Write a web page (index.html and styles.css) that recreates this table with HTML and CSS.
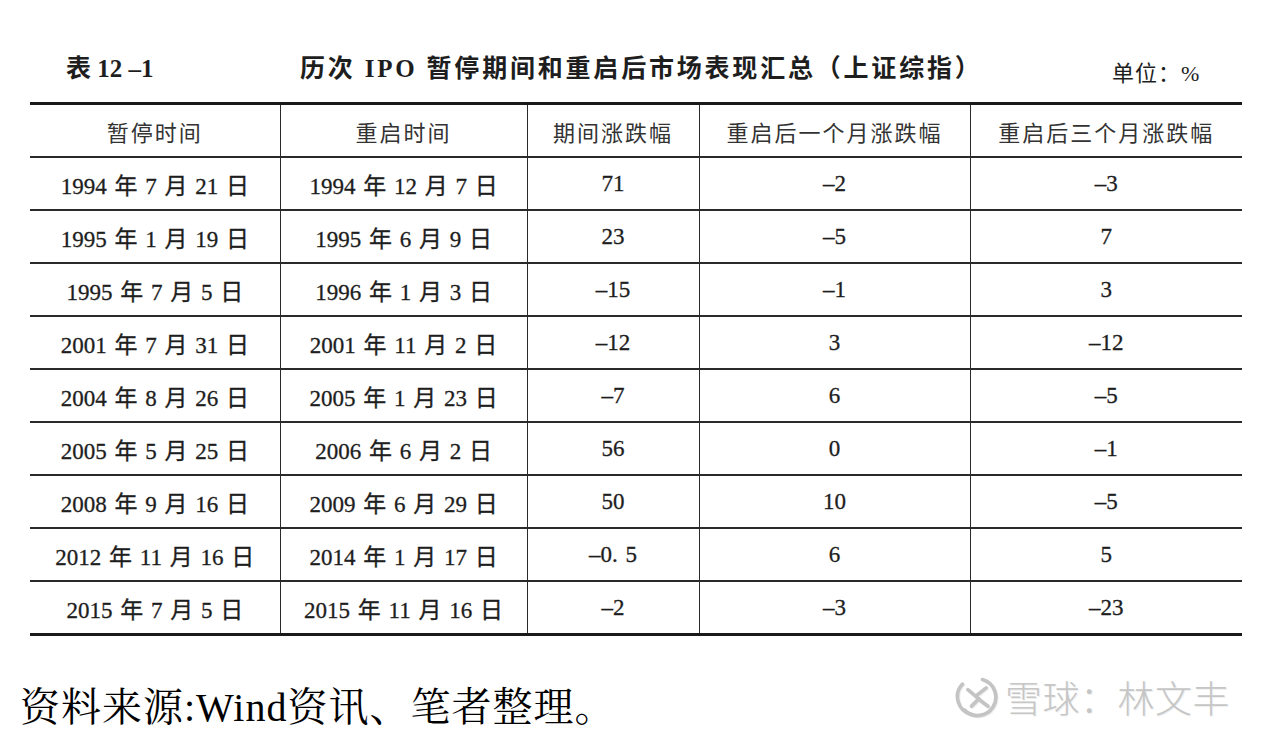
FILE: index.html
```html
<!DOCTYPE html>
<html lang="zh-CN">
<head>
<meta charset="utf-8">
<title>历次IPO暂停期间和重启后市场表现汇总</title>
<link rel="stylesheet" href="styles.css">
</head>
<body>
<div class="page">
  <div class="caption">
    <span class="cap-no">表 12 –1</span>
    <span class="cap-title">历次 IPO 暂停期间和重启后市场表现汇总（上证综指）</span>
    <span class="cap-unit">单位：%</span>
  </div>
  <table class="data">
    <colgroup>
      <col class="c1"><col class="c2"><col class="c3"><col class="c4"><col class="c5">
    </colgroup>
    <thead>
      <tr><th>暂停时间</th><th>重启时间</th><th>期间涨跌幅</th><th>重启后一个月涨跌幅</th><th>重启后三个月涨跌幅</th></tr>
    </thead>
    <tbody>
      <tr><td>1994 年 7 月 21 日</td><td>1994 年 12 月 7 日</td><td>71</td><td>–2</td><td>–3</td></tr>
      <tr><td>1995 年 1 月 19 日</td><td>1995 年 6 月 9 日</td><td>23</td><td>–5</td><td>7</td></tr>
      <tr><td>1995 年 7 月 5 日</td><td>1996 年 1 月 3 日</td><td>–15</td><td>–1</td><td>3</td></tr>
      <tr><td>2001 年 7 月 31 日</td><td>2001 年 11 月 2 日</td><td>–12</td><td>3</td><td>–12</td></tr>
      <tr><td>2004 年 8 月 26 日</td><td>2005 年 1 月 23 日</td><td>–7</td><td>6</td><td>–5</td></tr>
      <tr><td>2005 年 5 月 25 日</td><td>2006 年 6 月 2 日</td><td>56</td><td>0</td><td>–1</td></tr>
      <tr><td>2008 年 9 月 16 日</td><td>2009 年 6 月 29 日</td><td>50</td><td>10</td><td>–5</td></tr>
      <tr><td>2012 年 11 月 16 日</td><td>2014 年 1 月 17 日</td><td>–0. 5</td><td>6</td><td>5</td></tr>
      <tr><td>2015 年 7 月 5 日</td><td>2015 年 11 月 16 日</td><td>–2</td><td>–3</td><td>–23</td></tr>
    </tbody>
  </table>
  <div class="foot">
    <p class="source">资料来源:Wind资讯、笔者整理。</p>
    <div class="mark">
      <svg class="logo" viewBox="0 0 48 48" width="44" height="44" aria-hidden="true">
        <g fill="none" stroke="#c4c4c4" stroke-width="4" stroke-linecap="round">
          <path d="M30 5 A20 20 0 1 1 10 38"/>
          <path d="M18 43 A20 20 0 0 1 8 10"/>
          <path d="M14 16 L26 26 L18 34"/>
          <path d="M34 14 L24 22"/>
          <path d="M28 28 L36 34"/>
        </g>
      </svg>
      <span class="mark-text">雪球：林文丰</span>
    </div>
  </div>
</div>
</body>
</html>
```
FILE: styles.css
```css
html, body {
  margin: 0;
  padding: 0;
  background: #ffffff;
}
.page {
  width: 1266px;
  height: 740px;
  overflow: hidden;
  font-family: "Liberation Serif", "Noto Sans CJK SC", serif;
  color: #1e1e1e;
}
.caption {
  display: flex;
  align-items: baseline;
  padding: 48px 0 0 66px;
  height: 102px;
  box-sizing: border-box;
}
.cap-no {
  font-weight: bold;
  font-size: 25px;
  width: 234px;
}
.cap-title {
  font-family: "Liberation Serif", "Noto Sans CJK SC", sans-serif;
  font-weight: bold;
  font-size: 25px;
  letter-spacing: 2.8px;
  width: 812px;
}
.cap-unit {
  font-size: 22px;
  position: relative;
  top: 4px;
  letter-spacing: 1px;
}
.data {
  margin-left: 30px;
  width: 1212px;
  border-collapse: collapse;
  table-layout: fixed;
  border-top: 3px solid #1a1a1a;
  border-bottom: 3px solid #1a1a1a;
}
.c1 { width: 250px; }
.c2 { width: 247px; }
.c3 { width: 172px; }
.c4 { width: 271px; }
.c5 { width: 272px; }
.data th, .data td {
  height: 51px;
  padding: 0;
  text-align: center;
  vertical-align: middle;
  border-bottom: 2px solid #2a2a2a;
  border-right: 1.5px solid #2a2a2a;
  font-size: 22px;
  color: #1e1e1e;
}
.data th:last-child, .data td:last-child {
  border-right: none;
}
.data th {
  font-weight: normal;
  font-family: "Noto Sans CJK SC", sans-serif;
  font-size: 22px;
  color: #333;
  letter-spacing: 2px;
}
.data td {
  font-family: "Liberation Serif", "Noto Sans CJK SC", serif;
  font-size: 23px;
  word-spacing: 2px;
  -webkit-text-stroke: 0.3px #1e1e1e;
}
.foot {
  display: flex;
  align-items: center;
  justify-content: space-between;
  padding: 39px 36px 0 20px;
}
.source {
  margin: 0;
  font-family: "Liberation Serif", "Noto Serif CJK SC", "Noto Sans CJK SC", serif;
  font-size: 40px;
  color: #000;
  letter-spacing: 1px;
}
.mark {
  display: flex;
  align-items: center;
  gap: 6px;
  margin-top: -14px;
}
.logo {
  filter: drop-shadow(1px 1px 0 #eeeeee);
}
.mark-text {
  font-family: "Noto Sans CJK SC", sans-serif;
  font-weight: 300;
  font-size: 37px;
  color: #c6c6c6;
  letter-spacing: 0.5px;
  text-shadow: 1px 1px 0 #f0f0f0;
}
```
